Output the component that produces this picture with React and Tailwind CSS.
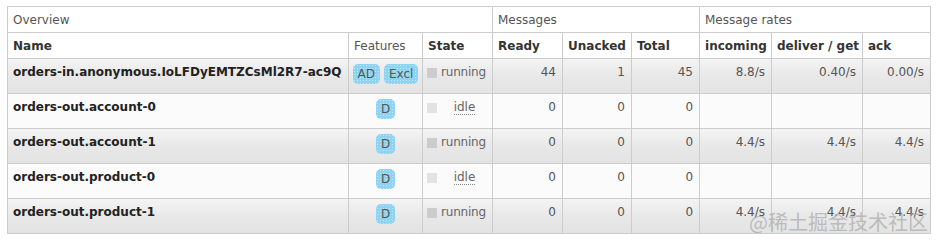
import React from "react";

// queue rows
const queues = [
  { name: "orders-in.anonymous.IoLFDyEMTZCsMl2R7-ac9Q", features: ["AD", "Excl"], state: "running", ready: 44, unacked: 1, total: 45, incoming: "8.8/s", deliver: "0.40/s", ack: "0.00/s" },
  { name: "orders-out.account-0", features: ["D"], state: "idle", ready: 0, unacked: 0, total: 0, incoming: "", deliver: "", ack: "" },
  { name: "orders-out.account-1", features: ["D"], state: "running", ready: 0, unacked: 0, total: 0, incoming: "4.4/s", deliver: "4.4/s", ack: "4.4/s" },
  { name: "orders-out.product-0", features: ["D"], state: "idle", ready: 0, unacked: 0, total: 0, incoming: "", deliver: "", ack: "" },
  { name: "orders-out.product-1", features: ["D"], state: "running", ready: 0, unacked: 0, total: 0, incoming: "4.4/s", deliver: "4.4/s", ack: "4.4/s" },
];

const Badge = ({ label }) => (
  <span className="inline-block rounded-[5px] bg-[#8fd3f3] bg-[radial-gradient(#ffffff70_0.6px,transparent_0.8px)] bg-[length:3px_3px] px-[5px] leading-[20px] text-[#555]">
    {label}
  </span>
);

const State = ({ state }) => (
  <div className="flex items-start whitespace-nowrap">
    <span
      className={`mt-[4px] h-[10px] w-[10px] shrink-0 ${
        state === "idle" ? "bg-[#e2e2e2]" : "bg-[#cccccc]"
      }`}
    />
    {state === "idle" ? (
      <span className="flex-1 text-center">
        <span className="border-b border-dotted border-[#888] leading-[16px]">idle</span>
      </span>
    ) : (
      <span className="ml-[4px] tracking-[-0.2px] text-[#666]">running</span>
    )}
  </div>
);

const App = () => {
  const th = "whitespace-nowrap border border-[#cccccc] px-[5px] text-left align-middle";
  const td = "whitespace-nowrap border border-[#cccccc] px-[5px] pt-[5px] align-top";
  const num = `${td} text-right pr-[6px] text-[#555]`;

  return (
    <div
      className="relative h-[242px] w-[936px] overflow-hidden bg-white pl-[7px] pt-[6px] text-[12px] leading-[16px] text-[#333]"
      style={{ fontFamily: "'DejaVu Sans', Verdana, sans-serif" }}
    >
      <table className="w-[923px] table-fixed border-collapse">
        <colgroup>
          <col className="w-[341px]" />
          <col className="w-[74px]" />
          <col className="w-[70px]" />
          <col className="w-[70px]" />
          <col className="w-[69px]" />
          <col className="w-[68px]" />
          <col className="w-[72px]" />
          <col className="w-[91px]" />
          <col className="w-[68px]" />
        </colgroup>
        <thead>
          <tr className="h-[26px]">
            <th colSpan={3} className={`${th} font-normal text-[#555]`}>Overview</th>
            <th colSpan={3} className={`${th} font-normal text-[#555]`}>Messages</th>
            <th colSpan={3} className={`${th} font-normal text-[#555]`}>Message rates</th>
          </tr>
          <tr className="h-[26px]">
            <th className={`${th} font-bold`}>Name</th>
            <th className={`${th} font-normal text-[#555]`}>Features</th>
            <th className={`${th} font-bold`}>State</th>
            <th className={`${th} font-bold`}>Ready</th>
            <th className={`${th} font-bold`}>Unacked</th>
            <th className={`${th} font-bold`}>Total</th>
            <th className={`${th} font-bold`}>incoming</th>
            <th className={`${th} font-bold`}>deliver / get</th>
            <th className={`${th} font-bold`}>ack</th>
          </tr>
        </thead>
        <tbody>
          {queues.map((q, i) => (
            <tr
              key={q.name}
              className={`h-[35px] ${
                i % 2 === 0
                  ? "bg-gradient-to-b from-[#f4f4f4] via-[#e8e8e8] to-[#e3e3e3]"
                  : "bg-[#fbfbfb]"
              }`}
            >
              <td className={`${td} font-bold text-[#222]`}>{q.name}</td>
              <td className={`${td} pt-[5px] text-center`}>
                <div className="flex justify-center gap-[4px]">
                  {q.features.map((f) => (
                    <Badge key={f} label={f} />
                  ))}
                </div>
              </td>
              <td className={`${td} pl-[4px] pr-0 text-[#666]`}>
                <State state={q.state} />
              </td>
              <td className={num}>{q.ready}</td>
              <td className={num}>{q.unacked}</td>
              <td className={num}>{q.total}</td>
              <td className={num}>{q.incoming}</td>
              <td className={num}>{q.deliver}</td>
              <td className={`${num} pr-[3px]`}>{q.ack}</td>
            </tr>
          ))}
        </tbody>
      </table>

      {/* watermark */}
      <div
        className="pointer-events-none absolute bottom-[8px] right-[8px] text-[20px] leading-[24px] text-[#a8a8a8]/70"
        style={{ fontFamily: "'Noto Sans CJK SC', sans-serif" }}
      >
        @稀土掘金技术社区
      </div>
    </div>
  );
};

export default App;
